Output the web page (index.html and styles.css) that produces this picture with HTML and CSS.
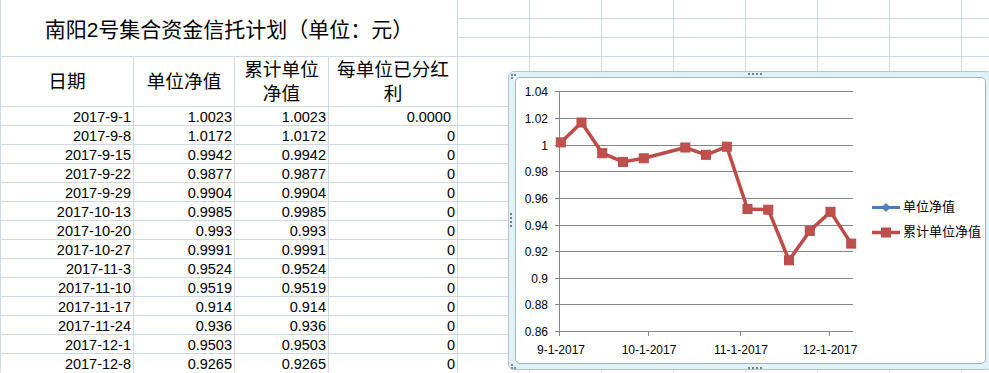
FILE: index.html
```html
<!DOCTYPE html>
<html lang="zh-CN">
<head>
<meta charset="utf-8">
<title>南阳2号集合资金信托计划</title>
<link rel="stylesheet" href="styles.css">
</head>
<body>
<div class="sheet">
  <div class="title">南阳2号集合资金信托计划（单位：元）</div>
  <i></i><i></i><i></i><i></i><i></i><i></i><i></i><i></i>
  <i></i><i></i><i></i><i></i><i></i><i></i><i></i><i></i>
  <i></i><i></i><i></i><i></i><i></i><i></i><i></i><i></i>

  <div class="h">日期</div><div class="h">单位净值</div><div class="h">累计单位<br>净值</div><div class="h">每单位已分红<br>利</div>
  <i></i><i></i><i></i><i></i><i></i><i></i><i></i><i></i>

  <div class="d">2017-9-1</div><div class="d">1.0023</div><div class="d">1.0023</div><div class="d pad">0.0000</div>
  <i></i><i></i><i></i><i></i><i></i><i></i><i></i><i></i>
  <div class="d">2017-9-8</div><div class="d">1.0172</div><div class="d">1.0172</div><div class="d">0</div>
  <i></i><i></i><i></i><i></i><i></i><i></i><i></i><i></i>
  <div class="d">2017-9-15</div><div class="d">0.9942</div><div class="d">0.9942</div><div class="d">0</div>
  <i></i><i></i><i></i><i></i><i></i><i></i><i></i><i></i>
  <div class="d">2017-9-22</div><div class="d">0.9877</div><div class="d">0.9877</div><div class="d">0</div>
  <i></i><i></i><i></i><i></i><i></i><i></i><i></i><i></i>
  <div class="d">2017-9-29</div><div class="d">0.9904</div><div class="d">0.9904</div><div class="d">0</div>
  <i></i><i></i><i></i><i></i><i></i><i></i><i></i><i></i>
  <div class="d">2017-10-13</div><div class="d">0.9985</div><div class="d">0.9985</div><div class="d">0</div>
  <i></i><i></i><i></i><i></i><i></i><i></i><i></i><i></i>
  <div class="d">2017-10-20</div><div class="d">0.993</div><div class="d">0.993</div><div class="d">0</div>
  <i></i><i></i><i></i><i></i><i></i><i></i><i></i><i></i>
  <div class="d">2017-10-27</div><div class="d">0.9991</div><div class="d">0.9991</div><div class="d">0</div>
  <i></i><i></i><i></i><i></i><i></i><i></i><i></i><i></i>
  <div class="d">2017-11-3</div><div class="d">0.9524</div><div class="d">0.9524</div><div class="d">0</div>
  <i></i><i></i><i></i><i></i><i></i><i></i><i></i><i></i>
  <div class="d">2017-11-10</div><div class="d">0.9519</div><div class="d">0.9519</div><div class="d">0</div>
  <i></i><i></i><i></i><i></i><i></i><i></i><i></i><i></i>
  <div class="d">2017-11-17</div><div class="d">0.914</div><div class="d">0.914</div><div class="d">0</div>
  <i></i><i></i><i></i><i></i><i></i><i></i><i></i><i></i>
  <div class="d">2017-11-24</div><div class="d">0.936</div><div class="d">0.936</div><div class="d">0</div>
  <i></i><i></i><i></i><i></i><i></i><i></i><i></i><i></i>
  <div class="d">2017-12-1</div><div class="d">0.9503</div><div class="d">0.9503</div><div class="d">0</div>
  <i></i><i></i><i></i><i></i><i></i><i></i><i></i><i></i>
  <div class="d">2017-12-8</div><div class="d">0.9265</div><div class="d">0.9265</div><div class="d">0</div>
  <i></i><i></i><i></i><i></i><i></i><i></i><i></i><i></i>
</div>

<div class="chart">
  <span class="grip grip-top"></span>
  <span class="grip grip-bottom"></span>
  <span class="grip grip-left"></span>
  <span class="corner corner-tl"></span>
  <span class="corner corner-bl"></span>
  <div class="plot">
    <svg class="plot-svg" width="469" height="285" viewBox="516 78 469 285" xmlns="http://www.w3.org/2000/svg">
      <g class="grid" stroke="#868686" stroke-width="1" shape-rendering="crispEdges">
        <line x1="555" y1="91.5" x2="853" y2="91.5"/>
        <line x1="555" y1="118.5" x2="853" y2="118.5"/>
        <line x1="555" y1="145.5" x2="853" y2="145.5"/>
        <line x1="555" y1="171.5" x2="853" y2="171.5"/>
        <line x1="555" y1="198.5" x2="853" y2="198.5"/>
        <line x1="555" y1="225.5" x2="853" y2="225.5"/>
        <line x1="555" y1="251.5" x2="853" y2="251.5"/>
        <line x1="555" y1="278.5" x2="853" y2="278.5"/>
        <line x1="555" y1="304.5" x2="853" y2="304.5"/>
        <line x1="555" y1="331.5" x2="853" y2="331.5"/>
        <line x1="559.5" y1="91" x2="559.5" y2="336"/>
        <line x1="648.5" y1="331" x2="648.5" y2="336"/>
        <line x1="740.5" y1="331" x2="740.5" y2="336"/>
        <line x1="829.5" y1="331" x2="829.5" y2="336"/>
      </g>
      <g class="ylab" text-anchor="end">
        <text x="548" y="96">1.04</text>
        <text x="548" y="123">1.02</text>
        <text x="548" y="150">1</text>
        <text x="548" y="176">0.98</text>
        <text x="548" y="203">0.96</text>
        <text x="548" y="230">0.94</text>
        <text x="548" y="256">0.92</text>
        <text x="548" y="283">0.9</text>
        <text x="548" y="309">0.88</text>
        <text x="548" y="336">0.86</text>
      </g>
      <g class="xlab" text-anchor="middle">
        <text x="561" y="353.6">9-1-2017</text>
        <text x="649" y="353.6">10-1-2017</text>
        <text x="741" y="353.6">11-1-2017</text>
        <text x="830" y="353.6">12-1-2017</text>
      </g>
      <polyline class="series" points="560.8,142.4 581.5,122.5 602.3,153.2 623,161.9 643.8,158.3 685.3,147.5 706,154.8 726.8,146.7 747.5,209 768.3,209.7 789,260.3 809.8,230.9 830.5,211.8 851.2,243.6"/>
      <g class="markers">
        <rect x="556.3" y="137.9" width="9" height="9"/>
        <rect x="577" y="118" width="9" height="9"/>
        <rect x="597.8" y="148.7" width="9" height="9"/>
        <rect x="618.5" y="157.4" width="9" height="9"/>
        <rect x="639.3" y="153.8" width="9" height="9"/>
        <rect x="680.8" y="143" width="9" height="9"/>
        <rect x="701.5" y="150.3" width="9" height="9"/>
        <rect x="722.3" y="142.2" width="9" height="9"/>
        <rect x="743" y="204.5" width="9" height="9"/>
        <rect x="763.8" y="205.2" width="9" height="9"/>
        <rect x="784.5" y="255.8" width="9" height="9"/>
        <rect x="805.3" y="226.4" width="9" height="9"/>
        <rect x="826" y="207.3" width="9" height="9"/>
        <rect x="846.7" y="239.1" width="9" height="9"/>
      </g>
      <g class="legend">
        <line class="leg-blue" x1="872" y1="207.5" x2="900" y2="207.5"/>
        <polygon class="diamond" points="886,203.5 890,207.5 886,211.5 882,207.5"/>
        <text x="903" y="211.3">单位净值</text>
        <line class="leg-red" x1="872" y1="232.5" x2="900" y2="232.5"/>
        <rect class="leg-square" x="881.5" y="228" width="9" height="9"/>
        <text x="903" y="235.8">累计单位净值</text>
      </g>
    </svg>
  </div>
</div>
</body>
</html>
```

FILE: styles.css
```css
html, body {
  margin: 0;
  padding: 0;
  background: #fff;
}

body {
  position: relative;
  width: 989px;
  height: 373px;
  overflow: hidden;
  font-family: "Liberation Sans", "Noto Sans CJK SC", sans-serif;
  color: #000;
}

.sheet {
  display: grid;
  grid-template-columns: 132px 100px 93px 128px repeat(8, 71px);
  grid-template-rows: 18px 18px 18px 49px repeat(14, 18px);
  gap: 1px;
  padding-left: 1px;
  background: #d0d7e5;
  width: max-content;
}

.sheet > * {
  background: #fff;
  display: block;
}

.title {
  grid-column: 1 / 5;
  grid-row: 1 / 4;
  display: flex;
  align-items: center;
  justify-content: center;
  font-size: 21px;
  white-space: nowrap;
}

.h {
  display: flex;
  align-items: center;
  justify-content: center;
  text-align: center;
  font-size: 18.67px;
  line-height: 24px;
}

.d {
  font-size: 14.5px;
  line-height: 20px;
  text-align: right;
  padding-right: 2px;
  white-space: nowrap;
}

.d.pad {
  padding-right: 6px;
}

/* chart object floating over the sheet */
.chart {
  position: absolute;
  left: 508px;
  top: 71px;
  width: 484px;
  height: 299px;
  box-sizing: border-box;
  border: 1px solid #b4c4d1;
  border-radius: 6px;
  background: #e1f2f6;
  padding: 5px 5px 5px 6px;
  display: flex;
}

.plot {
  flex: 1;
  background: #fff;
  border: 1px solid #a8b2bb;
  border-radius: 5px;
  overflow: hidden;
}

.plot-svg {
  display: block;
}

.grip {
  position: absolute;
}

.grip-top {
  left: 239px;
  top: 1px;
  width: 14px;
  height: 2px;
  background: repeating-linear-gradient(90deg, #6f7d8a 0 2px, transparent 2px 4px);
}

.grip-bottom {
  left: 239px;
  bottom: 0;
  width: 14px;
  height: 2px;
  background: repeating-linear-gradient(90deg, #6f7d8a 0 2px, transparent 2px 4px);
}

.grip-left {
  left: 1px;
  top: 141px;
  width: 2px;
  height: 14px;
  background: repeating-linear-gradient(180deg, #6f7d8a 0 2px, transparent 2px 4px);
}

.corner {
  position: absolute;
  width: 2px;
  height: 2px;
  background: #7d8a96;
}

.corner-tl {
  left: 2px;
  top: 2px;
  box-shadow: 3px 0 0 #7d8a96, 0 3px 0 #7d8a96;
}

.corner-bl {
  left: 2px;
  bottom: 0;
  box-shadow: 3px 0 0 #7d8a96, 0 -3px 0 #7d8a96;
}

.ylab text,
.xlab text {
  font-family: "Liberation Sans", sans-serif;
  font-size: 12px;
  fill: #000;
}

.series {
  fill: none;
  stroke: #be4b48;
  stroke-width: 3.5;
  stroke-linejoin: round;
}

.markers rect,
.leg-square {
  fill: #c0504d;
  stroke: #b84a47;
  stroke-width: 1;
}

.leg-blue {
  stroke: #4a7ebb;
  stroke-width: 3;
}

.diamond {
  fill: #4f81bd;
  stroke: #4a7ebb;
}

.leg-red {
  stroke: #be4b48;
  stroke-width: 3.5;
}

.legend text {
  font-family: "Noto Sans CJK SC", sans-serif;
  font-size: 13px;
  fill: #000;
}
```
